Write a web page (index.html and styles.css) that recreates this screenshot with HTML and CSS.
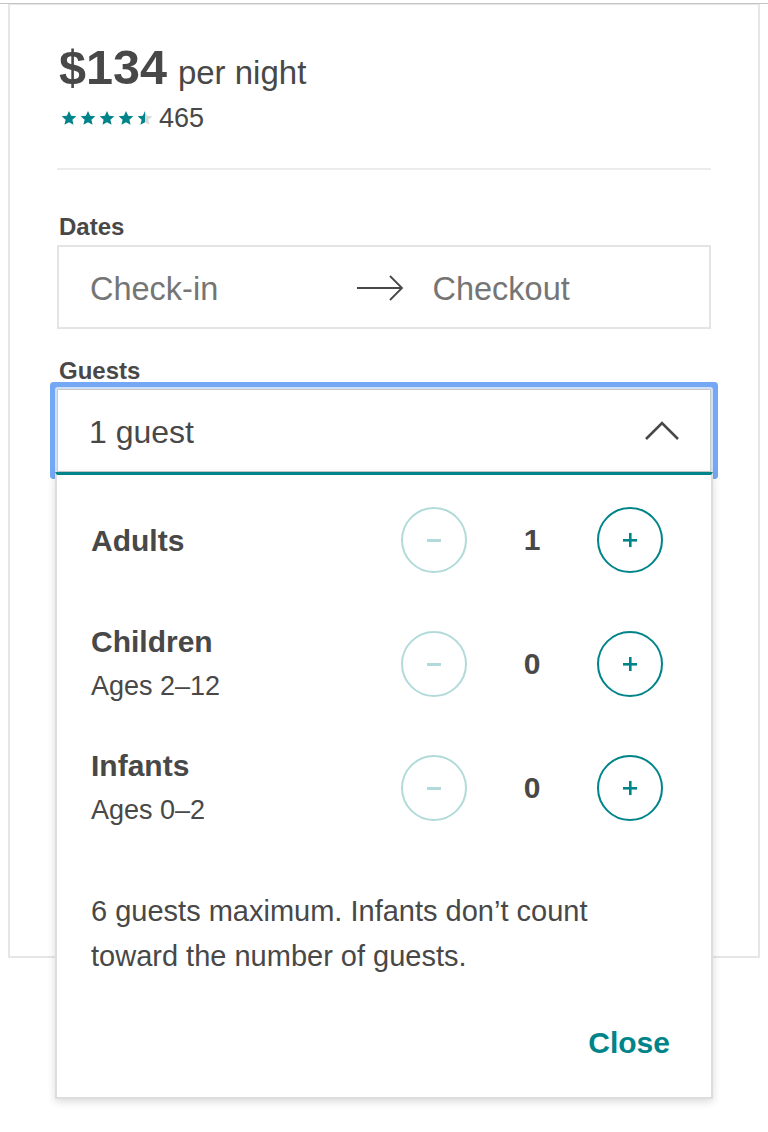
FILE: index.html
```html
<!DOCTYPE html>
<html lang="en">
<head>
<meta charset="utf-8">
<title>Booking</title>
<link rel="stylesheet" href="styles.css">
</head>
<body>
<div class="page">
<div class="topline"></div>
<div class="card">
  <div class="price">
    <span class="amount">$134</span>
    <span class="per">per night</span>
  </div>
  <div class="rating">
    <svg class="stars" width="92" height="16" viewBox="0 0 92 16" aria-hidden="true">
      <defs>
        <symbol id="star" viewBox="0 0 24 24"><path d="M12 1.5l3.2 7.1 7.8.8-5.9 5.2 1.7 7.7L12 18.3l-6.8 4 1.7-7.7L1 9.4l7.8-.8z"/></symbol>
        <linearGradient id="halfstar" x1="0" y1="0" x2="1" y2="0">
          <stop offset="0.5" stop-color="#008489"/>
          <stop offset="0.5" stop-color="#d8d8d8"/>
        </linearGradient>
      </defs>
      <g fill="#008489">
        <use href="#star" x="0" y="0" width="16" height="16"/>
        <use href="#star" x="19" y="0" width="16" height="16"/>
        <use href="#star" x="38" y="0" width="16" height="16"/>
        <use href="#star" x="57" y="0" width="16" height="16"/>
      </g>
      <use href="#star" x="76" y="0" width="16" height="16" fill="url(#halfstar)"/>
    </svg>
    <span class="reviews">465</span>
  </div>
  <div class="divider"></div>

  <div class="label label-dates">Dates</div>
  <div class="dates">
    <span class="placeholder">Check-in</span>
    <svg class="arrow" width="48" height="26" viewBox="0 0 48 26" aria-hidden="true">
      <path d="M1 13H46M34 1L46 13L34 25" fill="none" stroke="#484848" stroke-width="1.8"/>
    </svg>
    <span class="placeholder">Checkout</span>
  </div>

  <div class="label label-guests">Guests</div>
  <div class="guest-field">
    <div class="select">
      <span class="select-value">1 guest</span>
      <svg class="chevron" width="36" height="20" viewBox="0 0 36 20" aria-hidden="true">
        <path d="M2 18L18 2L34 18" fill="none" stroke="#484848" stroke-width="2.6"/>
      </svg>
    </div>
    <div class="popup">
      <div class="rows">
        <div class="row">
          <div class="row-text">
            <div class="row-title">Adults</div>
          </div>
          <div class="stepper">
            <span class="btn btn-off"><span class="minus"></span></span>
            <span class="num">1</span>
            <span class="btn"><span class="plus"></span></span>
          </div>
        </div>
        <div class="row">
          <div class="row-text">
            <div class="row-title">Children</div>
            <div class="row-sub">Ages 2–12</div>
          </div>
          <div class="stepper">
            <span class="btn btn-off"><span class="minus"></span></span>
            <span class="num">0</span>
            <span class="btn"><span class="plus"></span></span>
          </div>
        </div>
        <div class="row">
          <div class="row-text">
            <div class="row-title">Infants</div>
            <div class="row-sub">Ages 0–2</div>
          </div>
          <div class="stepper">
            <span class="btn btn-off"><span class="minus"></span></span>
            <span class="num">0</span>
            <span class="btn"><span class="plus"></span></span>
          </div>
        </div>
      </div>
      <p class="note">6 guests maximum. Infants don’t count toward the number of guests.</p>
      <div class="actions"><span class="close">Close</span></div>
    </div>
  </div>
</div>
</div>
</body>
</html>
```

FILE: styles.css
```css
* { box-sizing: border-box; }

html, body {
  margin: 0;
  padding: 0;
  background: #ffffff;
}

body {
  font-family: "Liberation Sans", Arial, Helvetica, sans-serif;
  color: #484848;
  min-height: 1132px;
}

.page {
  min-height: 1132px;
}

.topline {
  height: 4px;
  border-bottom: 1px solid #c4c4c4;
}

.card {
  margin: 0 8px;
  height: 954px;
  border: 2px solid #e6e6e6;
  border-top-width: 1px;
  padding: 34px 47px 0 47px;
  position: relative;
}

.price {
  display: flex;
  align-items: baseline;
  gap: 11px;
  height: 56px;
  padding-left: 2px;
}

.amount {
  font-size: 48.5px;
  font-weight: 700;
  line-height: 56px;
}

.per {
  font-size: 33px;
  line-height: 40px;
}

.rating {
  display: flex;
  align-items: center;
  height: 32px;
  margin-top: 7px;
  padding-left: 4px;
  gap: 6px;
}

.stars { display: block; }

.reviews {
  font-size: 27px;
  line-height: 32px;
}

.divider {
  height: 2px;
  background: #ebebeb;
  margin-top: 34px;
}

.label {
  font-size: 24px;
  font-weight: 700;
  line-height: 28px;
  padding-left: 2px;
}

.label-dates { margin-top: 43px; }
.label-guests { margin-top: 28px; }

.dates {
  margin-top: 4px;
  height: 84px;
  border: 2px solid #e4e4e4;
  display: grid;
  grid-template-columns: 1fr 48px 1fr;
  column-gap: 29px;
  align-items: center;
  padding: 4px 40px 0 31px;
}

.placeholder {
  font-size: 32.5px;
  color: #757575;
  line-height: 40px;
}

.arrow { display: block; margin-top: -2px; }

.guest-field {
  position: relative;
  margin-top: 4px;
}

.select {
  height: 83px;
  border: 1px solid #c8c8c8;
  border-radius: 1px;
  box-shadow: 0 0 0 2px #cfe0fb, 0 0 0 7px #74a7f4;
  display: flex;
  align-items: center;
  justify-content: space-between;
  padding: 3px 30px 0 31px;
}

.select-value {
  font-size: 32px;
  line-height: 40px;
}

.chevron { display: block; margin-top: -3px; }

.popup {
  position: absolute;
  top: 100%;
  left: -2px;
  right: -2px;
  z-index: 2;
  background: #ffffff;
  border: 2px solid #dddddd;
  border-top: 3px solid #008489;
  box-shadow: 0 3px 8px rgba(0, 0, 0, 0.14);
  padding: 20px 0 32px 0;
}

.rows {
  display: flex;
  flex-direction: column;
  gap: 34px;
  padding: 0 48px 0 34px;
}

.row {
  min-height: 90px;
  display: flex;
  align-items: center;
  justify-content: space-between;
}

.row-title {
  font-size: 30px;
  font-weight: 700;
  line-height: 45px;
}

.row-sub {
  font-size: 27px;
  line-height: 45px;
}

.stepper {
  display: flex;
  align-items: center;
}

.num {
  width: 130px;
  text-align: center;
  font-size: 30px;
  font-weight: 700;
  line-height: 40px;
}

.btn {
  width: 66px;
  height: 66px;
  border-radius: 50%;
  border: 2px solid #008489;
  display: flex;
  align-items: center;
  justify-content: center;
}

.btn-off { border-color: #b3dadb; }

.minus {
  width: 14px;
  height: 3px;
  background: #b3dadb;
}

.plus {
  width: 14px;
  height: 14px;
  background:
    linear-gradient(#008489, #008489) center / 14px 2.6px no-repeat,
    linear-gradient(#008489, #008489) center / 2.6px 14px no-repeat;
}

.note {
  margin: 56px 70px 0 34px;
  font-size: 29px;
  line-height: 45px;
}

.actions {
  margin-top: 41px;
  display: flex;
  justify-content: flex-end;
  padding-right: 41px;
}

.close {
  font-size: 30px;
  font-weight: 700;
  line-height: 45px;
  color: #008489;
}
```
